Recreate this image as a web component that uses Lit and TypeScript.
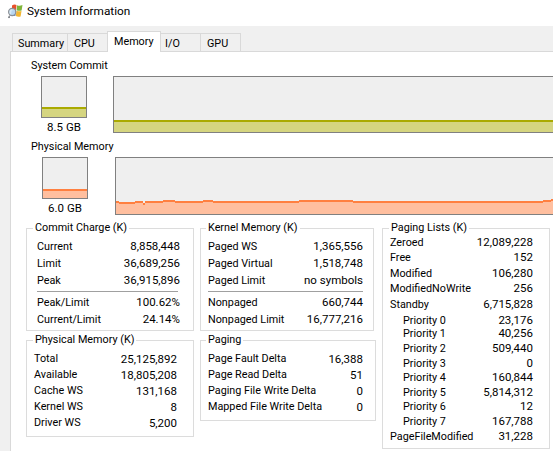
import { LitElement, html, css, svg } from "lit";
import { customElement } from "lit/decorators.js";

type Row = [string, string];
const TABS: [string, number, number][] = [
  ["Summary", 56, 5],
  ["CPU", 41, 6],
  ["I/O", 41, 4],
  ["GPU", 41, 6],
];
const STEPS: [number, number, number][] = [
  [0, 3, 43], [3, 19, 44], [19, 27, 43], [27, 29, 45], [29, 47, 43], [47, 59, 42],
  [59, 87, 43], [87, 97, 42], [97, 183, 43], [183, 237, 42], [237, 427, 43], [427, 435, 42], [435, 460, 41],
];
const COMMIT_A: Row[] = [["Current", "8,858,448"], ["Limit", "36,689,256"], ["Peak", "36,915,896"]];
const COMMIT_B: Row[] = [["Peak/Limit", "100.62%"], ["Current/Limit", "24.14%"]];
const KERNEL_A: Row[] = [["Paged WS", "1,365,556"], ["Paged Virtual", "1,518,748"], ["Paged Limit", "no symbols"]];
const KERNEL_B: Row[] = [["Nonpaged", "660,744"], ["Nonpaged Limit", "16,777,216"]];
const PHYS: Row[] = [["Total", "25,125,892"], ["Available", "18,805,208"], ["Cache WS", "131,168"], ["Kernel WS", "8"], ["Driver WS", "5,200"]];
const PAGING: Row[] = [["Page Fault Delta", "16,388"], ["Page Read Delta", "51"], ["Paging File Write Delta", "0"], ["Mapped File Write Delta", "0"]];
const LISTS: [string, string, number, boolean][] = [
  ["Zeroed", "12,089,228", 15, false], ["Free", "152", 16, false], ["Modified", "106,280", 15, false],
  ["ModifiedNoWrite", "256", 16, false], ["Standby", "6,715,828", 16, false],
  ["Priority 0", "23,176", 13, true], ["Priority 1", "40,256", 15, true], ["Priority 2", "509,440", 15, true],
  ["Priority 3", "0", 14, true], ["Priority 4", "160,844", 15, true], ["Priority 5", "5,814,312", 14, true],
  ["Priority 6", "12", 15, true], ["Priority 7", "167,788", 15, true], ["PageFileModified", "31,228", 15, false],
];

@customElement("app-root")
export class AppRoot extends LitElement {
  static styles = css`
    :host { display: block; width: 553px; height: 451px; overflow: hidden; background: #f0f0f0;
      font-family: "Roboto", "Liberation Sans", sans-serif; font-size: 10.8px; color: #000; }
    .title { height: 26px; background: #fff; display: flex; align-items: center; padding: 0 0 5px 7px; gap: 4px; box-sizing: border-box; }
    .title svg { display: block; flex: none; }
    .title span { font-size: 11.8px; }
    .tabs { height: 25px; display: flex; align-items: flex-end; padding-left: 12px; box-sizing: border-box; position: relative; }
    .tab { height: 18px; box-sizing: border-box; border: 1px solid #d9d9d9; border-bottom: 0; line-height: 19px; white-space: nowrap; margin-right: -1px; background: #f0f0f0; }
    .tab.active { height: 21px; background: #fff; width: 54px; padding-left: 6px; line-height: 19px; margin-bottom: -1px; position: relative; z-index: 1; }
    .panel { margin-left: 10px; background: #fff; border-top: 1px solid #d9d9d9; border-left: 1px solid #d9d9d9; height: 400px; box-sizing: border-box; padding-top: 5px; width: 600px; }
    .label { line-height: 16px; margin-left: 20px; padding-top: 1px; margin-bottom: 2px; }
    .meter { display: flex; align-items: flex-start; margin-bottom: 3px; }
    .meter.commit { padding-left: 30px; gap: 26px; }
    .meter.phys { padding-left: 31px; gap: 27px; margin-bottom: 0; }
    .gaugecol { width: 46px; flex: none; display: flex; flex-direction: column; align-items: center; }
    .gauge { width: 46px; height: 42px; box-sizing: border-box; }
    .value { line-height: 16px; margin-top: 1px; }
    .num, .value { font-size: 11.5px; }
    .box { border: 1px solid #808080; background: #efefef; display: flex; flex-direction: column; justify-content: flex-end; overflow: hidden; }
    .big { width: 500px; flex: none; box-sizing: border-box; }
    .big.commit { height: 57px; }
    .big.phys { height: 58px; }
    .big svg { display: block; }
    .line.ol { height: 2px; background: #aaaa00; }
    .fill.ol { background: #d5d580; }
    .line.or { height: 2px; background: #ff8040; }
    .fill.or { background: #ffbf9f; }
    .h8 { height: 8px; } .h7 { height: 7px; } .h10 { height: 10px; }
    .groups { display: flex; gap: 6px; padding-left: 15px; margin-top: 4px; align-items: flex-start; }
    .col { display: flex; flex-direction: column; gap: 1px; flex: none; }
    fieldset { margin: 0; padding: 0; min-width: 0; border: 1px solid #dcdcdc; box-sizing: border-box; display: block; }
    legend { padding: 0 2px; margin-left: 6px; line-height: 16px; }
    .mid legend { margin-left: 5px; }
    .w168 { width: 168px; } .w174 { width: 174px; } .w176 { width: 176px; }
    .commitg { padding: 2px 13px 2px 10px; }
    .physg { padding: 3px 16px 5px 7px; }
    .kernelg { padding: 2px 10px 2px 7px; }
    .pagingg { padding: 3px 12px 5px 7px; }
    .listsg { padding: 0 16px 4px 7px; }
    .row { display: flex; justify-content: space-between; white-space: nowrap; }
    .r17 { height: 17px; line-height: 17px; }
    .r16 { height: 16px; line-height: 16px; }
    .commitg hr, .kernelg hr { border: 0; height: 1px; background: #a0a0a0; margin: 2px 2px 2px 0; }
    .kernelg hr { margin-right: 0; }
    .lists { margin-top: -1px; }
    .lrow { line-height: 15px; }
    .lrow.sub { padding-left: 13px; }
  `;

  private rows(rows: Row[], cls: string) {
    return rows.map(([a, b]) => html`<div class="row ${cls}"><span>${a}</span><span class="num">${b}</span></div>`);
  }

  render() {
    return html`
      <div class="title">
        <svg width="16" height="16" viewBox="0 0 16 16">
          <path d="M5 2.5 Q7.5 0.8 9.5 2 L9 7 Q7 6 5 7Z" fill="#e8502a"/>
          <path d="M10 2.2 Q12.5 3.4 15.5 2 L14.6 7.4 Q12 8.2 9.6 7.2Z" fill="#7fb53a"/>
          <path d="M9.5 7.8 Q12 8.8 14.5 8 L13.6 13.4 Q11 14.4 8.8 13Z" fill="#f2b632"/>
          <path d="M4.6 7.6 Q7 6.6 9 7.6 L8.3 13 Q6 12 3.8 13Z" fill="#3a78c8"/>
          <circle cx="5.2" cy="9" r="3.6" fill="#cfe6f7" fill-opacity=".85" stroke="#8a8f96" stroke-width="1.2"/>
          <path d="M3 14.6 L2 15.2 L1 14.4 L2.4 12Z" fill="#6b6f75"/>
        </svg>
        <span>System Information</span>
      </div>
      <div class="tabs">
        ${TABS.slice(0, 2).map(([t, w, p]) => html`<div class="tab" style="width:${w}px;padding-left:${p}px">${t}</div>`)}
        <div class="tab active">Memory</div>
        ${TABS.slice(2).map(([t, w, p]) => html`<div class="tab" style="width:${w}px;padding-left:${p}px">${t}</div>`)}
      </div>
      <div class="panel">
        <div class="label">System Commit</div>
        <div class="meter commit">
          <div class="gaugecol">
            <div class="gauge box"><div class="line ol"></div><div class="fill ol h8"></div></div>
            <div class="value">8.5 GB</div>
          </div>
          <div class="big commit box"><div class="line ol"></div><div class="fill ol h10"></div></div>
        </div>
        <div class="label">Physical Memory</div>
        <div class="meter phys">
          <div class="gaugecol">
            <div class="gauge box"><div class="line or"></div><div class="fill or h7"></div></div>
            <div class="value">6.0 GB</div>
          </div>
          <div class="big phys box">
            <svg width="498" height="56" viewBox="0 0 498 56" shape-rendering="crispEdges">
              ${STEPS.map(([a, b, y]) => svg`
                <rect x=${a} y=${y + 2} width=${b - a} height=${56 - y - 2} fill="#ffbf9f"></rect>
                <rect x=${a} y=${y} width=${b - a} height="2" fill="#ff8040"></rect>`)}
            </svg>
          </div>
        </div>
        <div class="groups">
          <div class="col">
            <fieldset class="w168">
              <legend>Commit Charge (K)</legend>
              <div class="commitg">${this.rows(COMMIT_A, "r17")}<hr />${this.rows(COMMIT_B, "r17")}</div>
            </fieldset>
            <fieldset class="w168">
              <legend>Physical Memory (K)</legend>
              <div class="physg">${this.rows(PHYS, "r16")}</div>
            </fieldset>
          </div>
          <div class="col mid">
            <fieldset class="w174">
              <legend>Kernel Memory (K)</legend>
              <div class="kernelg">${this.rows(KERNEL_A, "r17")}<hr />${this.rows(KERNEL_B, "r17")}</div>
            </fieldset>
            <fieldset class="w176">
              <legend>Paging</legend>
              <div class="pagingg">${this.rows(PAGING, "r16")}</div>
            </fieldset>
          </div>
          <div class="col">
            <fieldset class="w168">
              <legend>Paging Lists (K)</legend>
              <div class="listsg"><div class="lists">
                ${LISTS.map(([a, b, h, sub]) => html`<div class="row lrow ${sub ? "sub" : ""}" style="height:${h}px"><span>${a}</span><span class="num">${b}</span></div>`)}
              </div></div>
            </fieldset>
          </div>
        </div>
      </div>
    `;
  }
}
